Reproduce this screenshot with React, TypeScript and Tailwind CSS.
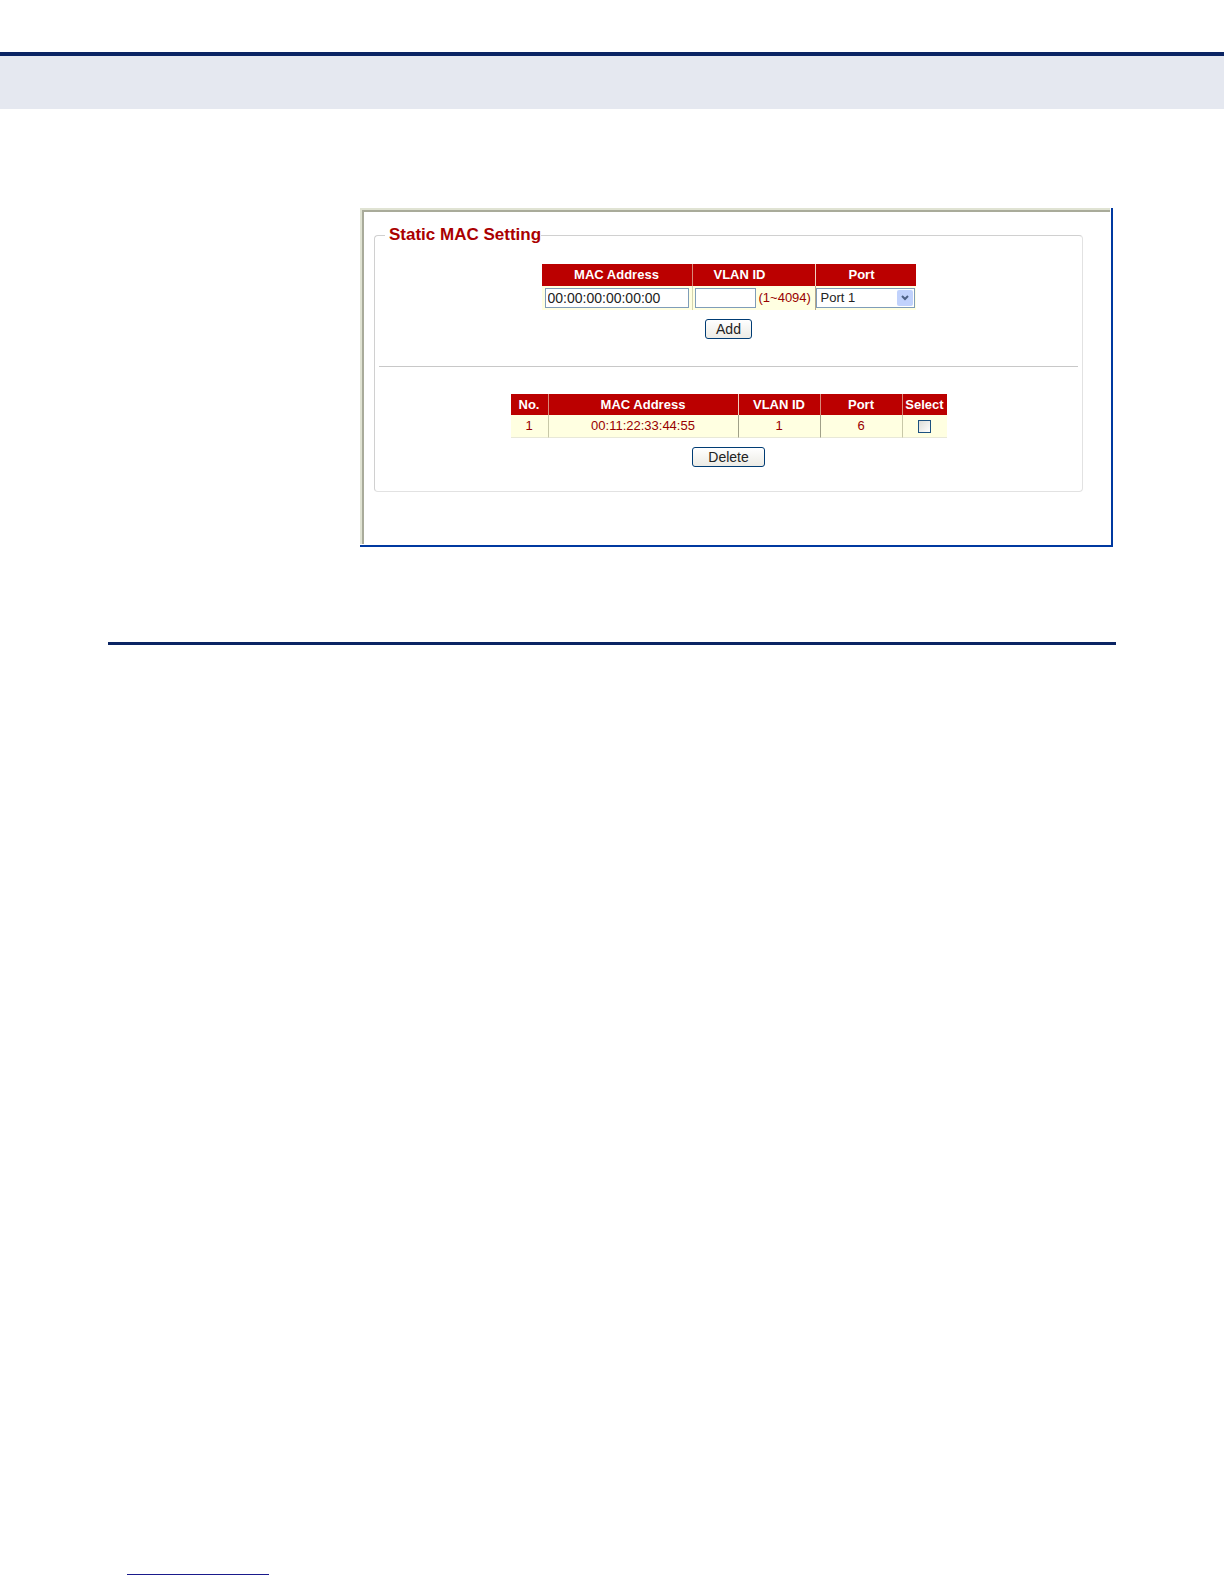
import React, { useState } from "react";

interface MacEntry {
  no: number;
  mac: string;
  vlan: number;
  port: number;
}

const entries: MacEntry[] = [
  { no: 1, mac: "00:11:22:33:44:55", vlan: 1, port: 6 },
];

const buttonClass =
  "h-5 rounded-[3px] border border-[#003c74] bg-linear-to-b from-white to-[#ecebe5] text-[14px] leading-[16px] text-[#222]";
const inputClass =
  "h-5 border border-[#7f9db9] bg-white px-[2px] text-[14px] leading-[16px] text-[#222] outline-none";

const AddForm: React.FC = () => {
  const [mac, setMac] = useState<string>("00:00:00:00:00:00");
  const [vlan, setVlan] = useState<string>("");
  const [port, setPort] = useState<string>("1");

  return (
    <form
      className="flex flex-col items-center"
      onSubmit={(e) => e.preventDefault()}
    >
      <table className="w-[374px] table-fixed border-separate border-spacing-0">
        <thead>
          <tr className="h-[22px] bg-[#bb0000] text-[13px] leading-[16px] text-white">
            <th className="w-[150px] p-0">
              <label htmlFor="mac">MAC Address</label>
            </th>
            <th className="w-[123px] border-l border-[#d98a7a] p-0 pr-7">
              <label htmlFor="vlan">VLAN ID</label>
            </th>
            <th className="border-l border-[#f0d0c0] p-0 pr-2">
              <label htmlFor="port">Port</label>
            </th>
          </tr>
        </thead>
        <tbody>
          <tr className="h-6 bg-[#ffffe1]">
            <td className="p-0 pl-[3px]">
              <input
                id="mac"
                type="text"
                value={mac}
                onChange={(e) => setMac(e.target.value)}
                className={`${inputClass} block w-[144px]`}
              />
            </td>
            <td className="border-l border-[#d5d5b0] p-0 pl-[2px]">
              <div className="flex items-center gap-[3px]">
                <input
                  id="vlan"
                  type="text"
                  value={vlan}
                  onChange={(e) => setVlan(e.target.value)}
                  className={`${inputClass} w-[61px]`}
                />
                <span className="text-[13px] leading-[16px] text-[#990000]">
                  (1~4094)
                </span>
              </div>
            </td>
            <td className="border-l border-[#b5a58a] p-0">
              <div className="relative">
                <select
                  id="port"
                  value={port}
                  onChange={(e) => setPort(e.target.value)}
                  className="block h-5 w-[99px] appearance-none border border-[#7f9db9] bg-white pl-1 text-[13px] leading-[16px] text-[#222] outline-none"
                >
                  <option value="1">Port 1</option>
                  <option value="2">Port 2</option>
                  <option value="3">Port 3</option>
                  <option value="4">Port 4</option>
                  <option value="5">Port 5</option>
                  <option value="6">Port 6</option>
                </select>
                <span className="pointer-events-none absolute top-[2px] right-[3px] flex h-4 w-4 items-center justify-center rounded-[2px] bg-[#c1d2fc]">
                  <svg width="8" height="6" viewBox="0 0 8 6" fill="none">
                    <path d="M1 1l3 3 3-3" stroke="#4d6185" strokeWidth="2" />
                  </svg>
                </span>
              </div>
            </td>
          </tr>
        </tbody>
      </table>
      <button type="submit" className={`${buttonClass} mt-[9px] w-[47px]`}>
        Add
      </button>
    </form>
  );
};

const MacTable: React.FC = () => {
  const [selected, setSelected] = useState<number[]>([]);

  const toggle = (no: number) => {
    setSelected((prev) =>
      prev.includes(no) ? prev.filter((n) => n !== no) : [...prev, no]
    );
  };

  return (
    <div className="flex flex-col items-center">
      <table className="w-[436px] table-fixed border-separate border-spacing-0 text-center text-[13px] leading-[16px]">
        <thead>
          <tr className="h-[21px] bg-[#bb0000] text-white">
            <th className="w-[37px] p-0">No.</th>
            <th className="w-[190px] border-l border-[#d98a7a] p-0">
              MAC Address
            </th>
            <th className="w-[82px] border-l border-[#f0d0c0] p-0">VLAN ID</th>
            <th className="w-[82px] border-l border-[#d98a7a] p-0">Port</th>
            <th className="border-l border-[#d98a7a] p-0">Select</th>
          </tr>
        </thead>
        <tbody>
          {entries.map((entry) => (
            <tr key={entry.no} className="h-[23px] bg-[#ffffe1] text-[#990000]">
              <td className="border-b border-[#e8e8d8] p-0">{entry.no}</td>
              <td className="border-b border-l border-b-[#e8e8d8] border-l-[#c8c8a8] p-0">
                {entry.mac}
              </td>
              <td className="border-b border-l border-b-[#e8e8d8] border-l-[#a0a088] p-0">
                {entry.vlan}
              </td>
              <td className="border-b border-l border-b-[#e8e8d8] border-l-[#a0a088] p-0">
                {entry.port}
              </td>
              <td className="border-b border-l border-b-[#e8e8d8] border-l-[#c8c8a8] p-0">
                <input
                  type="checkbox"
                  aria-label={`Select ${entry.mac}`}
                  checked={selected.includes(entry.no)}
                  onChange={() => toggle(entry.no)}
                  className="mx-auto block h-[13px] w-[13px] appearance-none border border-[#1c5180] bg-linear-to-br from-[#dcdcd7] to-white checked:bg-[#1c5180]"
                />
              </td>
            </tr>
          ))}
        </tbody>
      </table>
      <button type="button" className={`${buttonClass} mt-[9px] w-[73px]`}>
        Delete
      </button>
    </div>
  );
};

const App: React.FC = () => {
  return (
    <div className="flex min-h-screen flex-col bg-white font-['Liberation_Sans',Arial,sans-serif]">
      <header className="mt-[52px] h-[57px] border-t-4 border-[#0a2463] bg-[#e5e8f0]" />

      <main className="mx-[108px] mt-[99px] border-b-3 border-[#0a2463] pb-[95px]">
        <div className="mr-[3px] ml-[252px] border-r-2 border-b-2 border-[#0039a0]">
          <div className="mr-px mb-px border-t-2 border-l-2 border-[#e0e3d3]">
            <div className="border-t-2 border-l-2 border-[#a9ab9a] pt-[13px] pr-[27px] pb-[52px] pl-[10px]">
              <fieldset className="rounded-[4px] border border-[#d0d0d0] border-r-[#e2e2e2] border-b-[#e2e2e2] px-1 pt-[19px] pb-6">
                <legend className="ml-[6px] pl-1 text-[17px] leading-[20px] font-bold text-[#aa0000]">
                  Static MAC Setting
                </legend>
                <AddForm />
                <hr className="mt-[27px] mb-[27px] border-[#c8c8c8]" />
                <MacTable />
              </fieldset>
            </div>
          </div>
        </div>
      </main>

      <footer className="mt-auto mb-[9px] ml-[127px] w-[142px] border-b border-[#1a1a8c]" />
    </div>
  );
};

export default App;
